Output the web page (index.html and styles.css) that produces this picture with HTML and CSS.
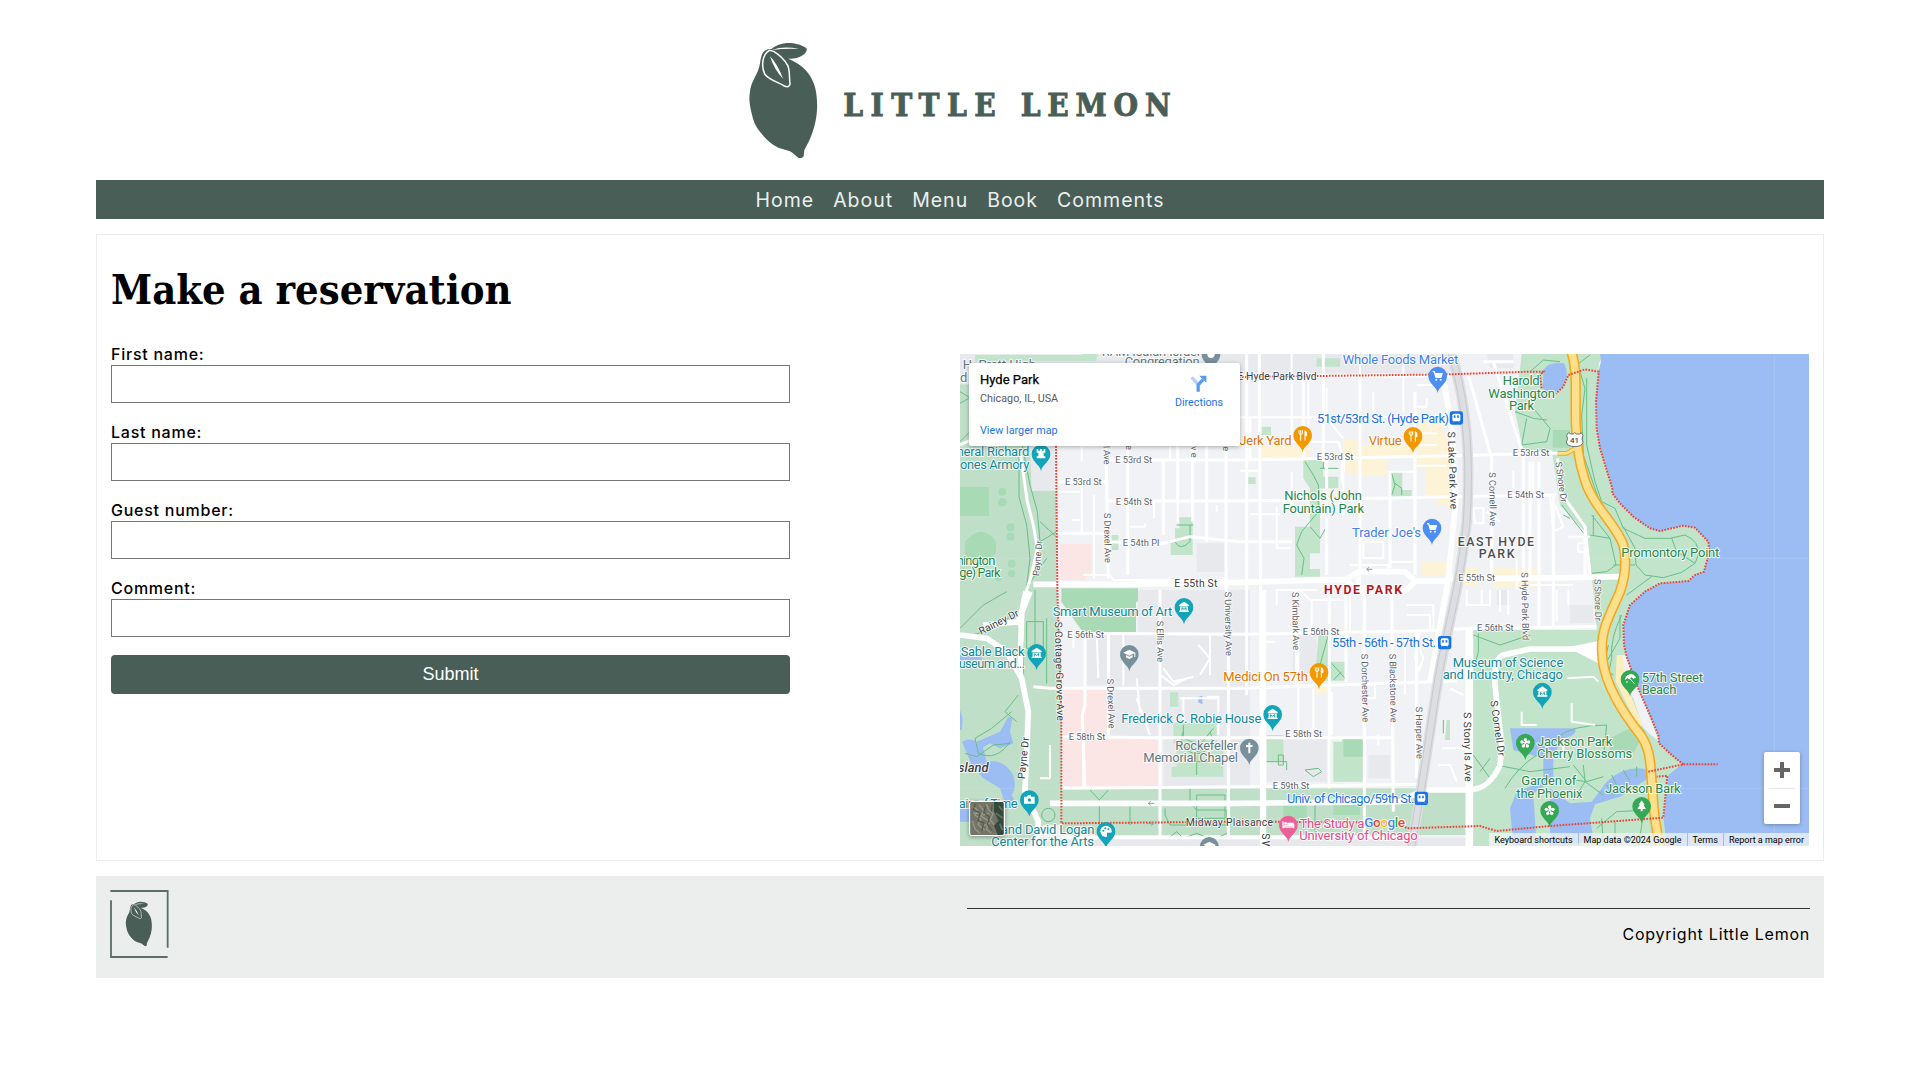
FILE: index.html
```html
<!DOCTYPE html>
<html lang="en">
<head>
<meta charset="utf-8">
<title>Little Lemon</title>
<link rel="stylesheet" href="styles.css">
</head>
<body>
<svg class="defs" width="0" height="0">
  <defs>
    <g id="lemon">
      <path class="brand" d="M95 76C90 92 91 105 84 122C78 138 62 160 60 185C56 205 59 225 64 246C70 272 74 284 88 303C103 322 120 342 145 353L180 364C192 370 198 380 206 384Q217 386 221 379L223 360C232 343 242 325 247 308C258 280 263 240 261 215C260 180 253 158 240 137C225 113 203 98 174 86C196 86 212 82 224 71Q233 63 229 54C215 44 190 38 170 39C150 41 136 47 124 57C112 56 99 62 95 76Z"/>
      <path class="leaf" d="M118 61C97 73 93 108 104 132C117 150 145 157 163 168Q178 174 180 162C177 142 181 125 173 106C162 86 144 72 131 64Z"/>
      <path class="vein" d="M120 79Q142 101 159 146Q133 120 120 79ZM126 60Q160 47 207 57Q165 55 126 60Z"/>
    </g>
    <path id="pin" d="M0 51C-4 30-28 24-28 0A28 28 0 1 1 28 0C28 24 4 30 0 51Z"/>
    <g id="cart"><path d="M-15-13H-10L-5 4H10L13-7H-8" fill="none" stroke="#fff" stroke-width="4"/><path d="M-8-8H13L9 3H-5Z" fill="#fff"/><circle cx="-4" cy="11" r="3" fill="#fff"/><circle cx="9" cy="11" r="3" fill="#fff"/></g>
    <g id="fork" fill="none" stroke="#fff" stroke-width="3"><path d="M-11-15V-5Q-6 1-1-5V-15M-6-15V16"/><path d="M7 16V-14Q13-12 12 1H7" fill="#fff"/></g>
    <g id="museum" fill="#fff"><path d="M-15-7L0-17L15-7V-3H-15ZM-12-2H12V10H15V14H-15V10H-12Z"/><path d="M-6 9V1L0 6L6 1V9" fill="none" stroke="#129eaf" stroke-width="3"/></g>
    <g id="train"><rect x="-20" y="-20" width="40" height="40" rx="7" fill="#1a73e8"/><rect x="-12" y="-13" width="24" height="23" rx="5" fill="#fff"/><path d="M-8-8H-2V0H-8ZM2-8H8V0H2ZM-10 14L-6 9M10 14L6 9" fill="#1a73e8" stroke="#fff" stroke-width="1"/></g>
    <g id="flower" fill="#fff"><circle cy="-10" r="5"/><circle cx="10" cy="-3" r="5"/><circle cx="6" cy="9" r="5"/><circle cx="-6" cy="9" r="5"/><circle cx="-10" cy="-3" r="5"/><path d="M0-10V0L10-3M0 0L6 9M0 0L-6 9M0 0L-10-3" stroke="#fff" stroke-width="3"/></g>
    <g id="cap" fill="#fff"><path d="M-18-5L0-14L18-5L0 4ZM-10 2L0 7L10 2V9L0 14L-10 9ZM15-5H18V8H15Z"/></g>
  </defs>
</svg>

<header class="header">
  <svg class="logo" viewBox="54 36 1272 348" role="img" aria-label="Little Lemon">
    <use href="#lemon"/>
    <text class="wordmark" x="340" y="257" textLength="457">LITTLE</text>
    <text class="wordmark" x="872" y="257" textLength="450">LEMON</text>
  </svg>
</header>

<nav class="nav">
  <a class="link home">Home</a><a class="link about">About</a><a class="link menu">Menu</a><a class="link book">Book</a><a class="link comments">Comments</a>
</nav>

<main class="main">
  <h1 class="title">Make a reservation</h1>
  <div class="columns">
    <form class="form">
      <div class="field"><label class="label" for="first">First name:</label><input class="input" id="first"></div>
      <div class="field"><label class="label" for="last">Last name:</label><input class="input" id="last"></div>
      <div class="field"><label class="label" for="guests">Guest number:</label><input class="input" id="guests"></div>
      <div class="field"><label class="label" for="comment">Comment:</label><input class="input" id="comment"></div>
      <button class="submit" type="button">Submit</button>
    </form>

    <div class="map">
      <svg class="canvas" viewBox="30 27 2547 1476">
        <rect x="30" y="27" width="2547" height="1476" fill="#f1f2f5"/>
        <!-- built-up blocks -->
        <g fill="#e7e9ed">
          <path d="M30 27H1500V85H870L400 100L30 118ZM240 303H316V437H245ZM564 735H900V1325H640V1180H470V1020H410V865H564ZM740 595H830V680H740ZM1610 27H1690V70H1620Z"/>
          <path d="M1028 870H1100V985H1028ZM950 1172H1130V1310H950ZM1255 1230H1320V1300H1255ZM1640 735H1680V780H1640ZM1860 780H1930V835H1860ZM30 1478H1560V1503H30Z"/>
        </g>
        <path d="M330 597H425V680L405 705H330ZM340 1030H470V1175H615L632 1190V1325H340Z" fill="#fbe6e5"/>
        <path d="M930 300H1080V345H930ZM1180 285H1225V320H1230V385H1180ZM1225 345H1310V390H1225ZM1405 235H1480V265H1490L1510 480H1460V455H1425V370H1395V330H1405ZM1230 300H1400V332H1230ZM1415 648H1495V690H1415ZM1540 670H1590V720H1540ZM1630 670H1760V725H1630ZM1095 1015H1135V1045H1095Z" fill="#fdf3d6"/>
        <!-- parks -->
        <g fill="#bfdfc9">
          <path d="M30 118H210V303H240L245 437H318V700L336 1000V1440H280L230 1503H30Z"/>
          <path d="M336 1330H1400L1380 1470H336ZM1395 1365L1440 1335H1560V1470H1375Z"/>
          <path fill="#c2e4cb" d="M1715 27H1960L1947 55L1945 80L1938 170L1940 250L1950 310L1987 430V445L2010 475L2050 515L2100 550L2130 558L2200 542L2235 548L2275 590L2278 620L2262 680L2235 690L2215 708L2130 715L2085 740L2040 780L2020 840L2022 900L2030 935L2045 980L2060 1020L2100 1110L2125 1170L2127 1195L2165 1230L2195 1258L2155 1290L2140 1420L2150 1503H1565V855H1940L1925 690L1905 560L1830 480L1805 315H1720L1695 200Z"/>
        </g>
        <path d="M688 517H728V630H662V590H675V550H688ZM1060 345H1120V395H1165V430H1110V695H1035V545H1080V430L1060 400ZM1322 380H1357V435H1385V456H1322ZM935 245H963V270H935ZM885 397H917V417H885ZM485 570H505V615H485ZM75 30H440V47H75ZM395 27H443V36H395ZM1105 870H1135V950H1188V1007H1115L1098 960ZM670 1135H800V1195H820V1295H665V1265H680V1195H670ZM660 1042H685V1085H660ZM950 1170H1000V1250H950ZM1175 1175H1245V1310H1150V1190H1175ZM1490 1125H1500V1185H1485ZM1100 65H1170V40H1100Z" fill="#c2e4cb"/>
        <path d="M1080 625H1125V672H1080Z" fill="#f1f2f5"/>
        <g fill="#a8dab5">
          <path d="M30 427H117V513H30ZM45 590Q95 530 138 590V625L115 643H45ZM334 730H564V770H558V863H400L334 770ZM1180 1178H1240V1235H1180ZM1808 255H1860V308H1808ZM1980 1180L2060 1140L2090 1150L2050 1225L1980 1215ZM1000 1380H1070V1420H1000ZM1150 1370H1230V1410H1150Z"/>
          <circle cx="157" cy="440" r="12"/><circle cx="157" cy="472" r="13"/><circle cx="182" cy="547" r="12"/><circle cx="182" cy="575" r="12"/><circle cx="185" cy="656" r="12"/><circle cx="185" cy="685" r="11"/><circle cx="145" cy="697" r="11"/>
        </g>
        <!-- sand and beach -->
        <path d="M2005 930H2028L2127 1190L2080 1150L2050 1060L2010 1000Z" fill="#f1f2f5"/>
        <path d="M2000 930H2018L2030 1020L2080 1145L2060 1135L1997 1010Z" fill="#fdeebd"/>
        <!-- water -->
        <g fill="#9cbdf3">
          <path d="M1950 27L1953 50L1945 80L1938 170L1940 250L1950 310L1987 430V445L2010 475L2050 515L2100 550L2130 558L2200 542L2235 548L2275 590L2278 620L2262 680L2235 690L2215 708L2130 715L2085 740L2040 780L2020 840L2022 900L2030 935L2045 980L2060 1020L2100 1110L2125 1170L2127 1195L2165 1230L2195 1258L2155 1290L2140 1420L2150 1503H2577V27Z"/>
          <path d="M1780 75Q1800 48 1842 55Q1862 90 1835 130Q1800 155 1778 128Z"/>
          <path d="M36 1190Q70 1170 100 1210L110 1250Q160 1240 190 1290Q200 1330 185 1350L205 1390H170L150 1330L100 1300L65 1260ZM30 1095L38 1120L36 1155H30ZM80 1190L150 1160L175 1115L187 1120L180 1160L190 1195L150 1210L120 1195L95 1210ZM30 930L95 935V945H30ZM30 1385H80V1430H30ZM745 1055L757 1052V1078L745 1072Z"/>
          <path d="M1680 1150H1875Q1885 1170 1840 1180L1810 1230V1310Q1760 1330 1750 1350L1760 1503H1690L1680 1390L1700 1340L1780 1310V1240L1690 1215ZM1800 1330L1860 1375L1925 1370L1970 1310Q2030 1255 2100 1275L2095 1300L2010 1355L1935 1378L1920 1420L1930 1480L1860 1503H1800Z"/>
        </g>
        <path d="M30 640H2577M30 1330H2577M2473 27V1503" stroke="#fff" stroke-opacity=".16" stroke-width="2" fill="none"/>
        <!-- footpaths -->
        <g class="paths">
          <path d="M30 140L60 158L30 175M30 290L70 250M207 330V455L230 540L240 640L228 740M217 303L240 420L262 500L270 590L320 560M235 720L290 640M270 530L318 575M30 850L100 780L170 740M30 870Q100 880 200 800M230 830H280V910H230ZM220 890V985M290 820V1015M255 735V960M45 1225L80 1235L130 1200L180 1195M180 1190Q140 1250 85 1225L75 1180L125 1150L185 1100M205 1050L165 1100L200 1130M420 1335L448 1365L475 1335M448 1365V1440M540 1385V1440M645 1390V1410L660 1440H830V1395H740L720 1375V1330M740 1350H825V1420H740ZM655 1480L680 1460L700 1480L740 1465L790 1485L840 1460M275 1410A20 20 0 1 1 315 1410A20 20 0 1 1 275 1410"/>
          <path d="M680 540H730M675 590Q690 620 720 590V540M1065 350L1090 390L1105 420V500L1080 530L1055 560L1040 600L1062 640L1055 690M1080 545L1110 580L1130 545M1110 370H1165M1120 350V370M1325 385L1335 420L1325 450M1335 415L1355 430V450M1110 960L1135 870M1145 955L1190 1005M1150 1005L1175 980M1140 1175V1310M950 1250H1010V1275M985 1230H1000V1260H985ZM1065 1275L1105 1270L1115 1280L1090 1295ZM700 1140V1180L750 1200L790 1150M680 1195L740 1220L800 1200M700 1160A45 45 0 1 0 780 1160M720 1250H780M740 1230V1290M1095 1380V1470M1480 1125V1165"/>
          <path d="M1695 200L1750 220L1790 225M1730 220L1715 300L1790 290L1800 250L1750 190M1740 80L1780 45L1830 50M1880 60L1920 30M1890 80L1905 130L1895 210L1900 330L1945 460M1910 100V300L1935 410L1955 470L1995 490L2020 550L2085 580H2160L2205 570Q2250 590 2245 630L2235 655L2180 620L2165 580M2020 545L2055 610L2058 660L2085 690L2140 698L2195 682L2235 655M1920 570L1980 580L1998 660L1970 680L1925 685M2105 695L2030 750M1990 660H2055M1925 510L1980 580M1930 510V570M1835 480L1905 570M1860 520L1840 510M1570 870L1650 900L1740 870M1585 865V920L1575 960M1570 1230L1620 1300L1575 1330M1620 1240L1590 1280M1640 1260L1740 1280L1860 1265M1665 1330Q1700 1270 1760 1230M1820 1180Q1860 1140 1970 1140L1960 1240M1870 1260L1910 1310L1960 1295M1905 1310L1870 1365M1905 1310L1960 1350M1905 1310L1850 1300M1905 1310L1900 1260M1985 1290L2000 1320M2020 1275L2040 1310M2060 1265V1295M1970 1320L1990 1350M1940 1450L2000 1400L2100 1395M1960 1503L1955 1420M2065 1503L2080 1410M1995 1503V1430M2015 810Q1980 880 1985 940L1975 990M2010 810V880L1970 950M1975 900L1960 970L1990 990"/>
        </g>
        <!-- minor streets -->
        <g class="road thin">
          <path d="M395 303V350M395 410V565M432 450V700M330 440H390M365 525H395M540 545H585V535M400 690H480L490 705H830M612 470V520M660 303V345M683 470V530M390 303H445M800 480V500M870 217H1370M870 377H935M980 290H1165L1180 340V510M1025 380V500M900 508H990M980 485V610H1020M1175 350V415M1200 660H1315V690M1400 265H1460M1410 300H1460M1400 362H1490M1315 380H1395M1315 650H1395M1240 590H1300V640H1240ZM1130 130V220L1180 280M1025 27V290M1075 100V290M1270 140V200M1230 60V217M1360 60V200M1400 120H1450M1400 185H1430V160M1570 490H1600V535H1575ZM1650 530L1610 500M1690 377V430M1750 350V440M1800 450L1810 560L1840 545L1815 480M1855 575H1920M1900 595H1885V620H1905"/>
          <path d="M370 860V910M400 1210V1330M440 865L445 1000M475 865V1030M520 870V1020M632 990L670 1020L710 1000M745 900L780 940L750 990M780 865V990M640 970L670 1010L730 995M560 1000L570 1100L600 1130M560 1060L600 1170M770 1055H805V1170M700 1055V1130M690 1060H800M300 1200V1300H270M980 780V735H1100M1050 735L1085 770V870M1085 765H1180M940 890H975M1045 880V1170M1090 1030V1165M1145 1040V1170M1200 735V860M1370 780H1450V860M1370 810H1440V860M1410 860Q1395 910 1395 940L1405 980L1420 940L1405 900M1365 870V1050M1275 1015V1060H1240M1285 1170V1200M1465 1260H1500L1520 1310M1500 1030L1540 1050M1475 1210H1550M1550 735V780H1620V735M1595 735V780M1650 735V800M1675 735V810M1820 735V830M1855 735V780M1740 720H1870M1700 640V735M1810 640V735M1840 1180V1240M1715 1100V1140H1760M1865 1075V1130L1935 1140M1850 1000L1930 995L1945 1010"/>
        </g>
        <!-- main streets -->
        <g class="road">
          <path d="M30 300L210 220M228 740L242 700L262 610L250 540L232 470L212 330M480 345H870L1500 332L1770 325L1825 325M320 410H475M470 468H870L1500 455L1820 450M320 565H470L475 590L640 595L720 575L870 590H1025M870 95L1500 92M320 865L880 868L1440 857L1560 850L1940 845M250 1025L300 1030H870L1520 1008M336 1175L640 1178H1330M336 1330L900 1325L1410 1318M336 1478L1400 1478M1600 50H1690"/>
          <path d="M468 303L475 700M533 303V690M640 345V570M683 303V470M728 303V530M770 303V590M828 303V735M828 690L835 865V1480M890 27V1050M928 27L935 1500M1060 100V345M1120 27V350M1230 95V690M1320 380V670M1395 140V690M1130 345V690M900 217V345M405 865V1080L397 1110L405 1325M475 865V1170M630 735V1480M1040 735V1030M1138 735V1330M1188 720V1010M1243 720V1470M1325 720L1330 1400M1400 860V1300M1180 340V380M1555 90L1625 340V700M1630 50L1720 330V700M1740 350V700M1767 350V850M1810 450V850M1905 560V690M1823 340L1830 440L1905 545L1920 690M1565 855V1503"/>
        </g>
        <g class="road wide">
          <path d="M250 718L500 718L870 712L1190 703L1225 680H1365L1395 708H1495M1500 700L1740 700L2010 695M1190 705L1220 738H1365L1395 710M30 870L110 880L170 920L215 1000L235 1100L225 1340L265 1430L260 1503M228 740L215 800L210 990M200 840L240 740M300 1375H870L1350 1370L1420 1335L1560 1335Q1620 1330 1650 1260L1655 1200L1635 1020Q1630 940 1660 930L1740 912L1880 912L1955 950M100 840L215 830"/>
          <path d="M940 735V1503M1555 855V1503M1482 110L1505 250L1517 470L1495 700L1475 815L1440 1010M1225 690V730"/>
        </g>
        <path d="M1860 905L1960 885V960Z" fill="#fff"/>
        <!-- railway -->
        <path d="M1505 27C1550 180 1562 330 1550 530C1530 730 1490 850 1465 1000C1445 1120 1430 1240 1385 1503" fill="none" stroke="#dcdee1" stroke-width="32"/>
        <path d="M1495 27C1540 180 1552 330 1540 530C1520 730 1480 850 1455 1000C1435 1120 1420 1240 1375 1503M1515 27C1560 180 1572 330 1560 530C1540 730 1500 850 1475 1000C1455 1120 1440 1240 1395 1503" fill="none" stroke="#c6c9cd" stroke-width="3"/>
        <!-- highway 41 -->
        <g fill="none">
          <path d="M1823 325H1850L1872 312" stroke="#f3a81c" stroke-width="14"/>
          <path d="M1864 20Q1877 60 1877 120V230Q1880 330 1903 400C1925 480 2000 540 2020 600Q2035 670 2010 740C1990 790 1952 850 1956 915C1955 1000 2010 1090 2060 1155C2110 1210 2100 1280 2108 1340Q2110 1420 2132 1510" stroke="#f3a81c" stroke-width="31"/>
          <path d="M1823 325H1850L1872 312" stroke="#fddf8c" stroke-width="8"/>
          <path d="M1864 20Q1877 60 1877 120V230Q1880 330 1903 400C1925 480 2000 540 2020 600Q2035 670 2010 740C1990 790 1952 850 1956 915C1955 1000 2010 1090 2060 1155C2110 1210 2100 1280 2108 1340Q2110 1420 2132 1510" stroke="#fddf8c" stroke-width="22"/>
        </g>
        <!-- neighbourhood boundary -->
        <path class="boundary" d="M318 303L322 735L334 1100V1435L870 1430L1350 1432L1370 1450L1590 1443L1640 1458L1800 1443L2140 1418L2152 1292L2120 1295M2095 1280L2200 1258H2303M2200 1258L2165 1230L2127 1195L2125 1170L2100 1110L2060 1020L2030 935L2022 900L2020 840L2040 780L2085 740L2130 715L2215 708L2235 690L2262 680L2278 620L2275 590L2235 548L2200 542L2130 558L2100 550L2050 515L2010 475L1987 445V430L1950 310L1940 250L1938 170L1946 80L1905 73L1855 90L1840 125L1818 146M1775 130L1770 90L1780 80H1740L1500 88L870 96"/>
        <!-- street names -->
        <g class="street">
          <text x="496" y="354" textLength="110">E 53rd St</text><text x="345" y="419" textLength="110">E 53rd St</text><text x="497" y="479" textLength="110">E 54th St</text><text x="518" y="602" textLength="110">E 54th Pl</text><text x="1100" y="346" textLength="110">E 53rd St</text><text x="1688" y="334" textLength="110">E 53rd St</text><text x="1672" y="460" textLength="110">E 54th St</text><text x="1525" y="708" textLength="110">E 55th St</text><text x="352" y="879" textLength="110">E 56th St</text><text x="1058" y="869" textLength="110">E 56th St</text><text x="1581" y="859" textLength="110">E 56th St</text><text x="356" y="1185" textLength="110">E 58th St</text><text x="1006" y="1177" textLength="110">E 58th St</text><text x="968" y="1331" textLength="110">E 59th St</text>
          <text transform="translate(460 303) rotate(88)" textLength="56">l Ave</text><text transform="translate(722 303) rotate(90)" textLength="35">ve</text><text transform="translate(527 300) rotate(90)">e</text><text transform="translate(818 304) rotate(90)">e</text>
          <text transform="translate(462 504) rotate(89)" textLength="150">S Drexel Ave</text><text transform="translate(471 1001) rotate(88)" textLength="150">S Drexel Ave</text><text transform="translate(620 827) rotate(89)" textLength="125">S Ellis Ave</text><text transform="translate(824 740) rotate(89)" textLength="193">S University Ave</text><text transform="translate(1026 741) rotate(89)" textLength="175">S Kimbark Ave</text><text transform="translate(1234 926) rotate(89)" textLength="206">S Dorchester Ave</text><text transform="translate(1318 926) rotate(89)" textLength="207">S Blackstone Ave</text><text transform="translate(1397 1085) rotate(89)" textLength="157">S Harper Ave</text><text transform="translate(1617 382) rotate(89)" textLength="162">S Cornell Ave</text><text transform="translate(1714 682) rotate(89)" textLength="204">S Hyde Park Blvd</text><text transform="translate(1816 352) rotate(82)" textLength="122">S Shore Dr</text><text transform="translate(1933 702) rotate(89)" textLength="126">S Shore Dr</text><text transform="translate(268 694) rotate(-85)" textLength="107">Payne Dr</text>
        </g>
        <g class="street major">
          <text x="673" y="726" textLength="129">E 55th St</text><text x="862" y="105" textLength="238">E Hyde Park Blvd</text><text x="707" y="1444" textLength="262">Midway Plaisance</text>
          <text transform="translate(93 870) rotate(-27)" textLength="130">Rainey Dr</text><text transform="translate(224 1303) rotate(-84)" textLength="126">Payne Dr</text><text transform="translate(314 830) rotate(88.6)" textLength="298">S Cottage Grove Ave</text><text transform="translate(1493 260) rotate(88)" textLength="233">S Lake Park Ave</text><text transform="translate(1541 1102) rotate(89)" textLength="208">S Stony Is Ave</text><text transform="translate(1621 1068) rotate(82)" textLength="168">S Cornell Dr</text><text transform="translate(936 1465) rotate(90)" textLength="65">S Wo</text>
        </g>
        <g class="place grey"><text x="38" y="72" textLength="220">H. Pratt High</text><text x="30" y="110">d f</text><text x="455" y="32" textLength="295">KAM Isaiah Israel</text><text x="524" y="64" textLength="225">Congregation</text><text x="676" y="1214" textLength="187">Rockefeller</text><text x="580" y="1252" textLength="284">Memorial Chapel</text></g>
        <g class="place green"><text x="20" y="659" textLength="116">hington</text><text x="28" y="697" textLength="124">ge) Park</text><text x="1003" y="466" textLength="233">Nichols (John</text><text x="998" y="503" textLength="244">Fountain) Park</text><text x="1658" y="119" textLength="111">Harold</text><text x="1615" y="158" textLength="200">Washington</text><text x="1677" y="196" textLength="75">Park</text><text x="2014" y="636" textLength="294">Promontory Point</text><text x="2075" y="1011" textLength="184">57th Street</text><text x="2075" y="1048" textLength="104">Beach</text><text x="1761" y="1202" textLength="226">Jackson Park</text><text x="1761" y="1240" textLength="286">Cherry Blossoms</text><text x="1714" y="1320" textLength="165">Garden of</text><text x="1699" y="1358" textLength="198">the Phoenix</text><text x="1965" y="1344" textLength="227">Jackson Bark</text></g>
        <g class="place teal"><text x="20" y="333" textLength="218">neral Richard</text><text x="30" y="371" textLength="208">ones Armory</text><text x="308" y="814" textLength="359">Smart Museum of Art</text><text x="32" y="933" textLength="192">Sable Black</text><text x="26" y="970" textLength="199">useum and...</text><text x="514" y="1134" textLength="420">Frederick C. Robie House</text><text x="1508" y="965" textLength="332">Museum of Science</text><text x="1478" y="1003" textLength="361">and Industry, Chicago</text><text x="26" y="1390" textLength="177">ain of Time</text><text x="153" y="1466" textLength="280">and David Logan</text><text x="124" y="1502" textLength="308">Center for the Arts</text></g>
        <g class="place blue"><text x="1178" y="56" textLength="347">Whole Foods Market</text><text x="1206" y="576" textLength="207">Trader Joe's</text></g>
        <g class="place transit"><text x="1101" y="234" textLength="396">51st/53rd St. (Hyde Park)</text><text x="1146" y="906" textLength="312">55th - 56th - 57th St.</text><text x="1011" y="1374" textLength="382">Univ. of Chicago/59th St.</text></g>
        <g class="place orange"><text x="868" y="299" textLength="157">Jerk Yard</text><text x="1256" y="301" textLength="99">Virtue</text><text x="820" y="1007" textLength="254">Medici On 57th</text></g>
        <g class="place pink"><text x="1049" y="1448" textLength="194">The Study a</text><text x="1048" y="1486" textLength="355">University of Chicago</text></g>
        <text class="district" x="1523" y="602" textLength="229">EAST HYDE</text><text class="district" x="1586" y="640" textLength="108">PARK</text>
        <text class="district focus" x="1122" y="747" textLength="234">HYDE PARK</text>
        <text class="place island" x="24" y="1280" textLength="92">sland</text>
        <path d="M1250 673H1267M1250 673L1257 667M1250 673L1257 679M595 1375H613M595 1375L602 1369M595 1375L602 1381M592 1436H610M610 1436L603 1430M610 1436L603 1442" fill="none" stroke="#999da3" stroke-width="3"/>
        <!-- route shield -->
        <path d="M1856 263L1863 267Q1870 269 1874 263Q1879 269 1888 267L1894 263L1899 271Q1893 283 1899 292Q1896 304 1875 305Q1850 304 1849 291Q1856 282 1850 271Z" fill="#fff" stroke="#6f7276" stroke-width="3"/>
        <text class="shield" x="1860" y="294" textLength="27">41</text>
        <!-- places -->
        <g class="pins">
          <g transform="translate(273 327)"><use href="#pin" fill="#12a4b8"/><path d="M-13-15H-8V-10H-3V-15H3V-10H8V-15H13V-4H8V7H13V13H-13V7H-8V-4H-13Z" fill="#fff"/></g>
          <g transform="translate(783 28)"><use href="#pin" fill="#78909c"/><circle r="11" fill="#fff"/></g>
          <g transform="translate(1463 93)"><use href="#pin" fill="#4d8df6"/><use href="#cart"/></g>
          <g transform="translate(1446 549)"><use href="#pin" fill="#4d8df6"/><use href="#cart"/></g>
          <g transform="translate(1058 271)"><use href="#pin" fill="#f29900"/><use href="#fork"/></g>
          <g transform="translate(1389 274)"><use href="#pin" fill="#f29900"/><use href="#fork"/></g>
          <g transform="translate(1107 982)"><use href="#pin" fill="#f29900"/><use href="#fork"/></g>
          <g transform="translate(702 787)"><use href="#pin" fill="#12a4b8"/><use href="#museum"/></g>
          <g transform="translate(260 925)"><use href="#pin" fill="#12a4b8"/><use href="#museum"/></g>
          <g transform="translate(968 1108)"><use href="#pin" fill="#12a4b8"/><use href="#museum"/></g>
          <g transform="translate(1777 1041)"><use href="#pin" fill="#12a4b8"/><use href="#museum"/></g>
          <g transform="translate(538 928)"><use href="#pin" fill="#78909c"/><use href="#cap"/></g>
          <g transform="translate(778 1504)"><use href="#pin" fill="#78909c"/><use href="#cap"/></g>
          <g transform="translate(898 1209)"><use href="#pin" fill="#78909c"/><path d="M0-16V16M-10-6H10" stroke="#fff" stroke-width="6"/></g>
          <g transform="translate(238 1364)"><use href="#pin" fill="#12a4b8"/><path d="M-16-9H-7L-4-14H5V-9H16V12H-16Z" fill="#fff"/><circle cy="1" r="5" fill="#12a4b8"/></g>
          <g transform="translate(468 1459)"><use href="#pin" fill="#12a4b8"/><circle r="17" fill="#fff"/><g fill="#12a4b8"><circle cx="-8" cy="-2" r="3"/><circle cx="-2" cy="-9" r="3"/><circle cx="7" cy="-6" r="3"/><path d="M3 4H18V17H3Z"/></g></g>
          <g transform="translate(1015 1440)"><use href="#pin" fill="#ec5f98"/><path d="M-16-11V10M-16 6H16M16 10V-3M-13 1H16" stroke="#fff" stroke-width="4"/><path d="M-3-7H16V2H-3Z" fill="#fff"/><circle cx="-8" cy="-5" r="4" fill="#fff"/></g>
          <g transform="translate(1726 1194)"><use href="#pin" fill="#34a853"/><use href="#flower"/></g>
          <g transform="translate(1799 1396)"><use href="#pin" fill="#34a853"/><use href="#flower"/></g>
          <g transform="translate(2040 1003)"><use href="#pin" fill="#34a853"/><path d="M-14 0Q-12-12 0-14Q11-16 17-6L10-3L4-8L-2-1L-8-5ZM0-2L13 13M-12 8H-6" fill="#fff" stroke="#fff" stroke-width="3"/></g>
          <g transform="translate(2075 1384)"><use href="#pin" fill="#34a853"/><path d="M0-18L9-5H5L13 8H3V15H-3V8H-13L-5-5H-9Z" fill="#fff"/></g>
        </g>
        <use href="#train" x="1519" y="219"/><use href="#train" x="1484" y="893"/><use href="#train" x="1414" y="1360"/>
        <text class="google" x="1243" y="1446" textLength="122"><tspan fill="#4285f4">G</tspan><tspan fill="#ea4335">o</tspan><tspan fill="#fbbc04">o</tspan><tspan fill="#4285f4">g</tspan><tspan fill="#34a853">l</tspan><tspan fill="#ea4335">e</tspan></text>
      </svg>

      <div class="card">
        <div class="info">
          <div class="name">Hyde Park</div>
          <div class="address">Chicago, IL, USA</div>
          <a class="larger">View larger map</a>
        </div>
        <div class="directions">
          <svg class="arrow" viewBox="723 90 50 52"><path d="M727 97L746 118" stroke="#b5d0fb" stroke-width="10"/><path d="M747 141V120L762 104" fill="none" stroke="#5b9bec" stroke-width="10"/><path d="M750 92H772V114Z" fill="#5b9bec"/></svg>
          <span class="go">Directions</span>
        </div>
      </div>
      <svg class="satellite" viewBox="0 0 35 35">
        <rect width="35" height="35" fill="#69705f"/>
        <path d="M0 0H25L28 35H0Z" fill="#757567"/>
        <path d="M2 5L7 8L5 14L11 18L8 24L15 30M9 3L14 9L11 15L19 20L17 29L22 33M17 2L19 8L24 12L21 19L25 24M2 20L5 29L10 33M3 12H9M13 14L20 12M14 25L21 22" fill="none" stroke="#9b998b" stroke-width="1.3"/>
        <path d="M5 2L3 8L10 12L8 20L14 22L12 31M16 5L14 11L20 16L18 24L23 30M23 3L22 10" fill="none" stroke="#55594c" stroke-width="1.3"/>
        <path d="M25 0H35V35H29L25 25L30 20L25 10Z" fill="#34483b"/>
        <path d="M30 4L34 9M27 12L34 17M31 23L34 30" stroke="#5e7561" stroke-width="2"/>
      </svg>
      <div class="zoom">
        <svg class="sign" viewBox="0 0 16 16"><path d="M0 8H16M8 0V16"/></svg>
        <svg class="sign" viewBox="0 0 16 16"><path d="M0 8H16"/></svg>
      </div>
      <div class="legal"><span class="note keys">Keyboard shortcuts</span><span class="note data">Map data ©2024 Google</span><span class="note terms">Terms</span><span class="note report">Report a map error</span></div>
    </div>
  </div>
</main>

<footer class="footer">
  <svg class="badge" viewBox="57 117 180 210">
    <path class="frame" d="M61 123H233V293M63 151V321H233"/>
    <use href="#lemon" transform="translate(85 140.4) scale(.385)"/>
  </svg>
  <div class="copy"><p class="copyright">Copyright Little Lemon</p></div>
</footer>
</body>
</html>
```
FILE: styles.css
```css
* { box-sizing: border-box; }
body { margin: 0 auto; width: 90%; background: #fff; color: #000; font-family: Inter, "Liberation Sans", sans-serif; }
.defs { position: absolute; }

.header { height: 180px; padding-top: 42px; display: flex; justify-content: center; align-items: flex-start; }
.logo { width: 424px; height: 116px; }
.brand { fill: #495e57; }
.leaf { fill: #495e57; stroke: #fff; stroke-width: 4.5; }
.vein { fill: #fff; }
.wordmark { font: bold 94px "DejaVu Serif Condensed", "DejaVu Serif", serif; fill: #495e57; stroke: #495e57; stroke-width: 2.5; }

.nav { height: 39px; background: #495e57; display: flex; justify-content: center; gap: 19px; }
.link { color: #edefee; font-size: 19.5px; letter-spacing: 1px; line-height: 40px; white-space: nowrap; }

.main { margin-top: 15px; height: 627px; padding: 14px; border: 1px solid #ececec; }
.title { margin: 0; height: 94px; font: bold 41.3px/82px "DejaVu Serif Condensed", "DejaVu Serif", serif; white-space: nowrap; }
.columns { display: grid; grid-template-columns: 1fr 1fr; }
.form { width: 80%; display: flex; flex-direction: column; gap: 18px; }
.field { display: flex; flex-direction: column; }
.label { height: 22px; font-size: 16px; font-weight: 500; letter-spacing: .75px; line-height: 22px; }
.input { width: 100%; height: 38px; border: 1px solid #767676; padding: 0 8px; font: 16px "Liberation Sans", sans-serif; background: #fff; }
.submit { width: 100%; height: 39px; border: 0; border-radius: 4px; background: #495e57; color: #fff; font: 18px "Liberation Sans", sans-serif; }

.map { position: relative; margin-top: 11px; height: 492px; overflow: hidden; font-family: Roboto, sans-serif; }
.canvas { display: block; width: 849px; height: 492px; }
.paths { fill: none; stroke: #67bf85; stroke-width: 3; }
.road { fill: none; stroke: #fff; stroke-width: 9; stroke-linejoin: round; }
.thin { stroke-width: 6; }
.wide { stroke-width: 17; }
.boundary { fill: none; stroke: #ea4335; stroke-width: 6; stroke-dasharray: 5 4; }
.street, .place, .district { paint-order: stroke; stroke: #fff; stroke-width: 6; stroke-linejoin: round; stroke-opacity: .85; }
.street { font-size: 28px; fill: #5f6368; stroke-width: 5; }
.major { font-size: 31px; fill: #3c4043; }
.place { font-size: 39px; }
.grey { fill: #62777f; }
.green { fill: #25874a; }
.teal { fill: #128797; }
.blue { fill: #3d7ff0; }
.transit { fill: #2070df; }
.orange { fill: #e37400; }
.pink { fill: #e8488b; }
.island { fill: #3c4043; font-style: italic; font-weight: 500; }
.district { font-size: 37px; font-weight: 500; fill: #4a4d52; }
.focus { font-weight: 700; fill: #b3191f; }
.shield { font-size: 24px; font-weight: 500; fill: #4a4d52; }
.google { font: 500 41px Roboto, sans-serif; paint-order: stroke; stroke: #fff; stroke-width: 5; }
.pins { stroke-linejoin: round; }

.card { position: absolute; left: 9px; top: 9px; width: 271px; height: 83px; padding: 9px 17px 0 11px; background: #fff; border-radius: 2px; box-shadow: 0 1px 4px rgba(0, 0, 0, .3); display: flex; justify-content: space-between; }
.name { font-size: 13px; -webkit-text-stroke: .25px #000; line-height: 16px; }
.address { margin-top: 4px; font-size: 10.8px; line-height: 14px; color: #5b5b5b; }
.larger { display: block; margin-top: 18px; font-size: 10.8px; line-height: 14px; color: #1a73e8; }
.directions { display: flex; flex-direction: column; align-items: center; padding-top: 3px; }
.arrow { width: 17px; height: 17px; }
.go { margin-top: 4px; font-size: 10.7px; line-height: 14px; color: #1a73e8; }
.satellite { position: absolute; left: 9px; top: 447px; width: 36px; height: 35px; border: 1px solid #fff; border-radius: 3px; box-shadow: 0 1px 4px rgba(0, 0, 0, .35); }
.zoom { position: absolute; right: 9px; bottom: 22px; width: 36px; height: 72px; background: #fff; border-radius: 2px; box-shadow: 0 1px 4px rgba(0, 0, 0, .3); display: grid; grid-template-rows: 1fr 1fr; place-items: center; background-image: linear-gradient(#e6e6e6, #e6e6e6); background-size: 26px 1px; background-position: center; background-repeat: no-repeat; }
.sign { width: 16px; height: 16px; stroke: #666; stroke-width: 4; }
.legal { position: absolute; right: 0; bottom: 0; height: 13px; display: flex; font-size: 9px; line-height: 14px; color: #000; }
.note { padding: 0 5px; background: rgba(245, 245, 245, .72); margin-left: 1px; white-space: nowrap; }

.footer { margin-top: 15px; height: 102px; padding: 13px 14px 0 13px; background: #eceeed; display: flex; justify-content: space-between; }
.badge { width: 60px; height: 70px; }
.frame { fill: none; stroke: #5b6f68; stroke-width: 5.5; }
.copy { width: 843px; padding-top: 19px; }
.copyright { margin: 0; border-top: 1px solid #333; text-align: right; font-size: 16px; letter-spacing: .75px; line-height: 24px; padding-top: 13px; }
```
